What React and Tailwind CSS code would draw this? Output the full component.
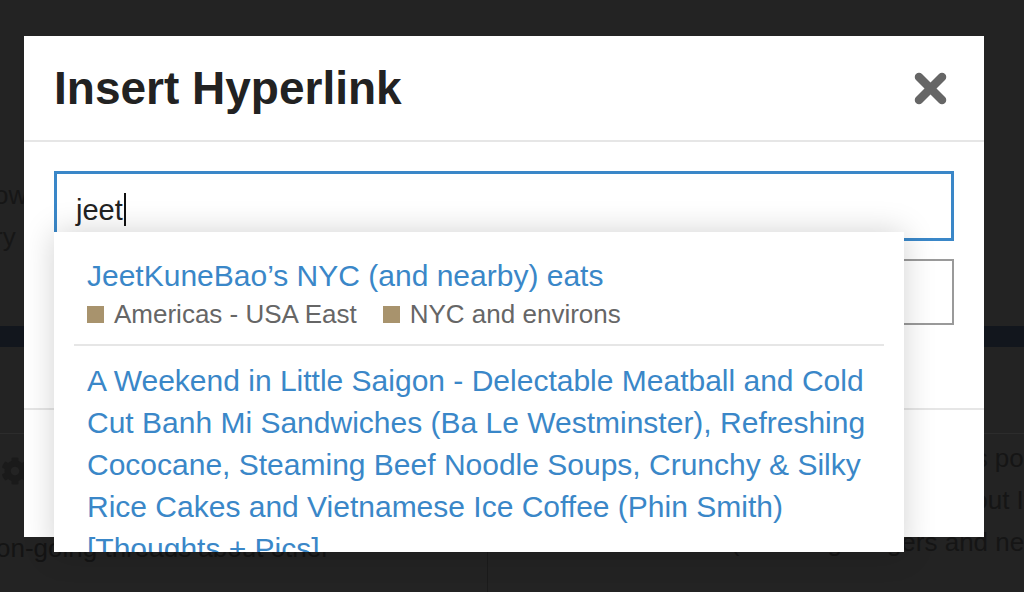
import React from "react";
import { FaCog } from "react-icons/fa";

function CloseIcon() {
  return (
    <svg width="33" height="33" viewBox="0 0 33 33" aria-hidden="true">
      <line x1="5" y1="5" x2="28" y2="28" stroke="#666" strokeWidth="8.5" strokeLinecap="round" />
      <line x1="28" y1="5" x2="5" y2="28" stroke="#666" strokeWidth="8.5" strokeLinecap="round" />
    </svg>
  );
}

function Tag({ label }) {
  return (
    <span className="flex items-center gap-[10px]">
      <span className="w-[17px] h-[17px] bg-[#a8936d] shrink-0" />
      <span>{label}</span>
    </span>
  );
}

export default function App() {
  return (
    <div
      className="relative w-[1024px] h-[592px] overflow-hidden bg-[#232323]"
      style={{ fontFamily: '"Liberation Sans", Arial, sans-serif' }}
    >
      {/* page behind the overlay */}
      <div className="flex flex-col w-full h-full">
        <div className="h-[174px] shrink-0" />
        <div className="-ml-[6px] text-[26px] leading-[42px] text-[#161616]">
          <div>ow</div>
          <div>ry</div>
        </div>
        <div className="h-[68px] shrink-0" />
        <div className="h-[21px] shrink-0 bg-[#12161d]" />
        <div className="h-[86px] shrink-0" />
        <div className="flex flex-1 border-t border-[#2c2c2c]">
          <div className="w-[487px] shrink-0 pt-[23px] flex flex-col">
            <FaCog className="ml-[1px] text-[#1a1a1a]" size={28} />
            <div className="-ml-[4px] mt-[42px] text-[26px] leading-[42px] text-[#141414] whitespace-nowrap">
              on-going threads about other
            </div>
          </div>
          <div className="flex-1 border-l border-[#1b1b1b] pt-[3px] text-[26px] leading-[42px] text-[#151515] whitespace-nowrap text-right">
            <div className="-mr-[33px]">where I put my restaurants posts</div>
            <div className="-mr-[62px]">and my thoughts about Italian</div>
            <div className="-mr-[19px]">(including burgers and new</div>
          </div>
        </div>
      </div>

      {/* modal */}
      <div className="absolute left-[24px] top-[36px] w-[960px] h-[501px] bg-white flex flex-col">
        <div className="h-[106px] shrink-0 flex items-center justify-between pl-[30px] pr-[37px] border-b-2 border-[#e6e6e6]">
          <h1 className="text-[46px] font-bold text-[#222] leading-none">Insert Hyperlink</h1>
          <CloseIcon />
        </div>
        <div className="px-[30px] pt-[29px] pb-[83px] border-b-2 border-[#e6e6e6]">
          <div className="h-[70px] border-[3px] border-[#3a87c8] flex items-center pl-[19px] pt-[10px] text-[29px] text-[#222]">
            <span>jeet</span>
            <span className="inline-block w-[2px] h-[33px] bg-[#111] ml-[1px] -mt-[3px]" />
          </div>
          <div className="mt-[18px] h-[66px] border-2 border-[#9a9a9a]" />
        </div>
        <div className="flex-1" />

        {/* autocomplete dropdown */}
        <div className="absolute left-[30px] top-[196px] w-[850px] h-[320px] overflow-hidden bg-white shadow-[0_0_30px_rgba(0,0,0,0.18)] px-[20px] pt-[10px]">
          <div className="px-[13px] pt-[13px] pb-[13px] border-b-2 border-[#e6e6e6]">
            <div className="text-[30px] leading-[42px] text-[#3a87c8]">
              JeetKuneBao’s NYC (and nearby) eats
            </div>
            <div className="flex gap-[26px] text-[26px] leading-[34px] text-[#666]">
              <Tag label="Americas - USA East" />
              <Tag label="NYC and environs" />
            </div>
          </div>
          <div className="pl-[13px] pr-[12px] pt-[14px]">
            <div className="text-[30px] leading-[42px] text-[#3a87c8]">
              A Weekend in Little Saigon - Delectable Meatball and Cold Cut Banh Mi Sandwiches (Ba Le Westminster), Refreshing Cococane, Steaming Beef Noodle Soups, Crunchy &amp; Silky Rice Cakes and Vietnamese Ice Coffee (Phin Smith) [Thoughts + Pics]
            </div>
          </div>
        </div>
      </div>
    </div>
  );
}
